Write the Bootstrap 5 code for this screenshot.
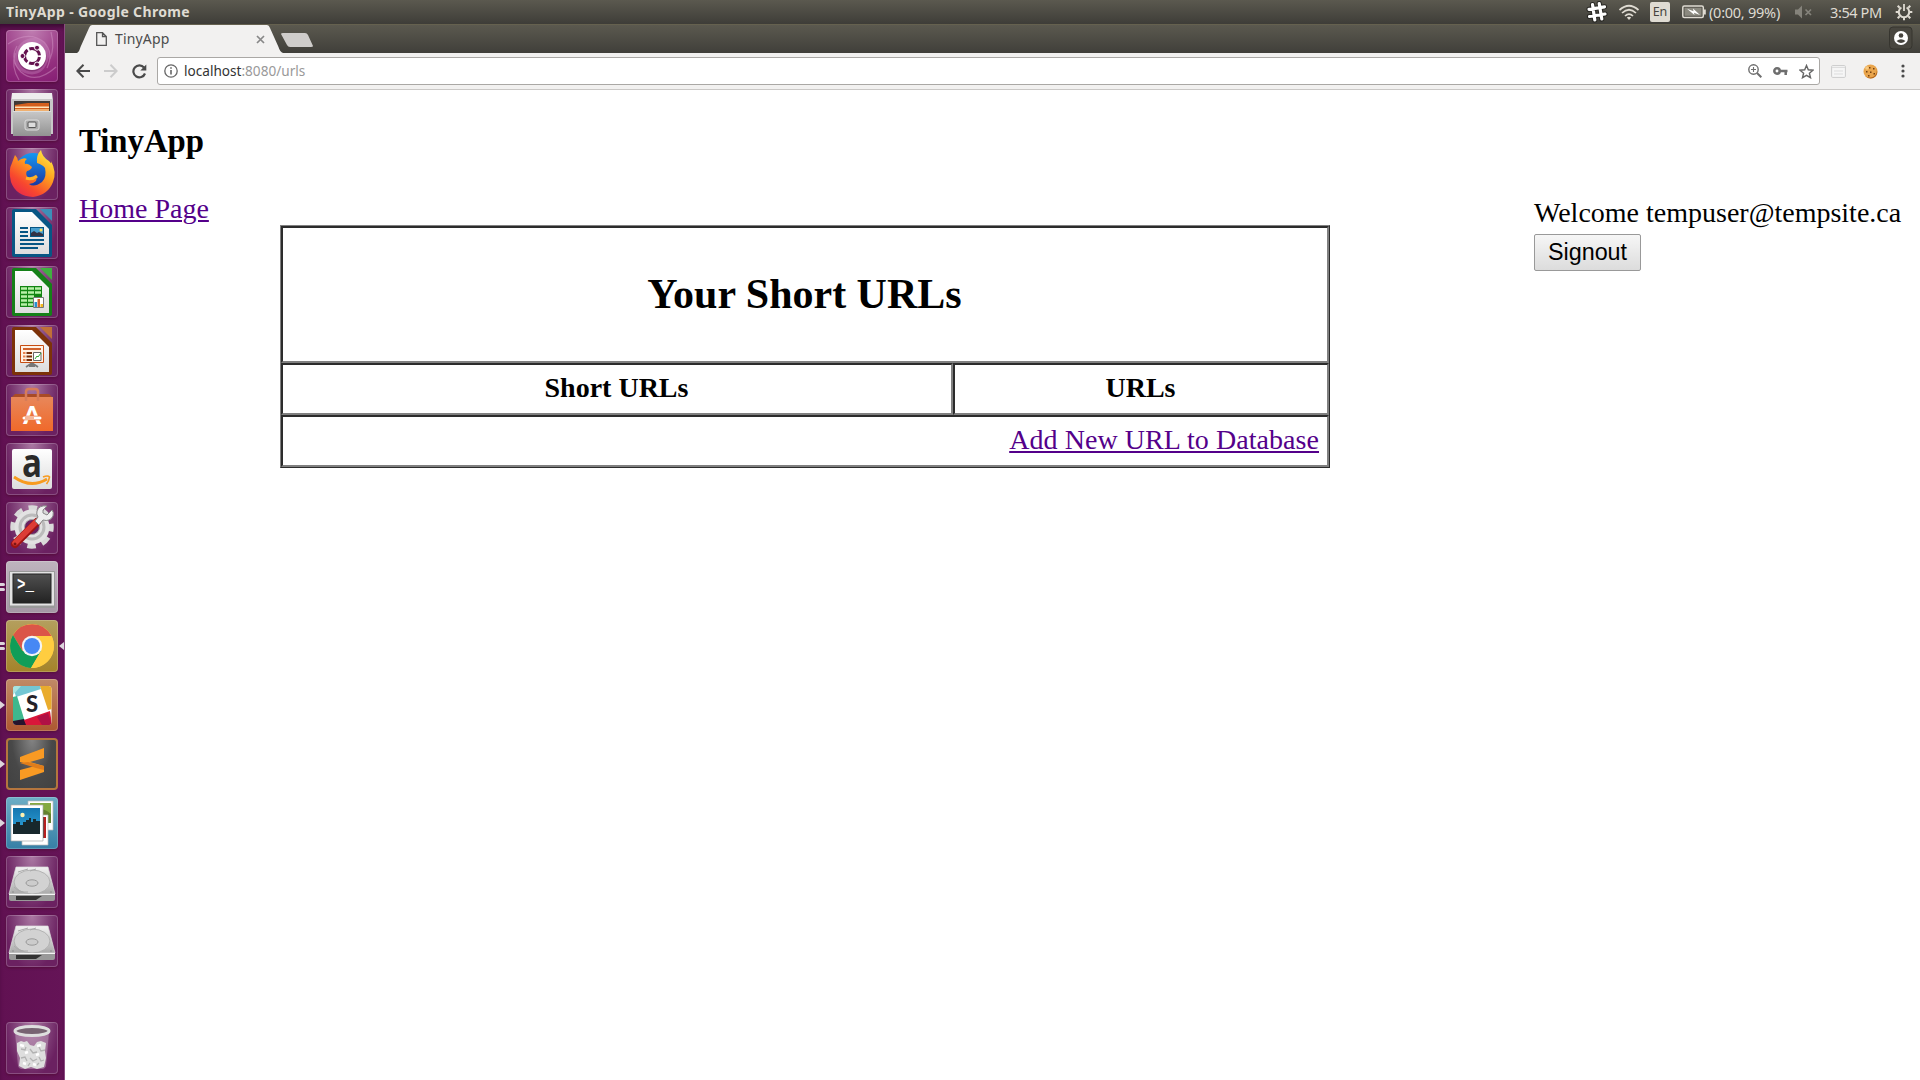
<!DOCTYPE html>
<html lang="en">
<head>
<meta charset="utf-8">
<title>TinyApp</title>
<link href="https://cdn.jsdelivr.net/npm/bootstrap@5.3.0/dist/css/bootstrap.min.css" rel="stylesheet">
<style>
body{width:1920px;height:1080px;overflow:hidden;background:#fff;color:#000;font-family:"Noto Sans",sans-serif}
svg{display:block;flex:none}
.panel-top{height:24px;background:linear-gradient(#5b594f,#3e3d38);color:#dfdbd2;font-size:14.5px;line-height:22px;white-space:nowrap}
.panel-top>div:not(.lang){padding-bottom:1px}
.win-title{font-weight:700;font-size:14px;padding-left:6px;letter-spacing:.35px}
.lang{width:20px;height:20px;margin-left:10px;background:#dfdbd2;color:#46443e;border-radius:2px;line-height:20px;font-size:12.5px;text-align:center}
.slack-ind{margin-right:2px}
.batt-icon{margin-left:12px}
.t-batt{width:74px;margin-left:3px;letter-spacing:-.25px}
.vol-icon{margin-left:11px}
.t-clock{width:54px;margin-left:16px;letter-spacing:-.4px}
.gear-icon{margin:0 7px 0 11px}
.launcher{width:65px;background:linear-gradient(90deg,#611152,#651457);border-right:1px solid #8a4a80;box-shadow:inset 0 5px 5px -2px #3a0a32;padding:6px 0 6px 6px;gap:7px}
.tile{position:relative;width:52px;height:52px;border-radius:4px;background:radial-gradient(ellipse at 50% 0,#ab79a3 0,#82437a 45%,#6b2161 75%);box-shadow:inset 0 0 0 1px #ffffff33,0 1px 3px #3005}
.tile svg{width:52px;height:52px;overflow:visible}
.tile-dash{background:radial-gradient(circle at 50% 0,#c07eb2,#94307f 65%,#851d73)}
.tile-term{background:linear-gradient(#beb4be,#a497a4)}
.tile-chrome{background:linear-gradient(#b49f5e,#a4832a)}
.tile-slack{background:linear-gradient(#c08a67,#ad5830)}
.tile-subl{background:radial-gradient(ellipse at 50% 0,#858585,#484848 55%,#404040);box-shadow:inset 0 0 0 2px #b5763e}
.tile-photo{background:linear-gradient(#6daec6,#367fa6)}
.run1::before{content:"";position:absolute;left:-6px;top:22px;border:4px solid transparent;border-left:5px solid #ddd5dc;border-right:0}
.run2::before,.run2::after{content:"";position:absolute;left:-6px;top:22px;width:5px;height:3px;background:#ddd5dc;border-radius:0 2px 2px 0}
.run2::after{top:27px}
.focusmark{position:absolute;left:53px;top:22px;border:4px solid transparent;border-right:5px solid #ddd5dc;border-left:0}
.tabstrip{height:29px;background:linear-gradient(#5b594f,#403f3a);border-top:1px solid #65614f}
.tab-shape{position:relative;width:206px;height:28px;margin-left:12px;color:#4c4c4c;font-size:14px}
.tab-shape>svg.bgshape{position:absolute;left:0;top:0}
.tab-in{position:relative;height:28px;padding:0 18px 0 19px}
.tab-label{margin-left:8px;padding-bottom:2px;letter-spacing:.15px}
.newtab{margin:7px 0 0 -3px}
.avatar-btn{margin:1px 7px 0 0}
.toolbar-c{height:37px;background:#f2f1f0;border-bottom:1px solid #cac8c6}
.ic-back{margin-left:11px}
.ic-next{margin-left:14px}
.ic-11{margin-left:11px}
.ic-17{margin-left:17px}
.ic-23{margin-left:23px}
.omni{height:28px;width:1663px;margin-left:10px;background:#fff;border:1px solid #aaa8a5;border-radius:3px;font-size:13.6px;color:#333;padding:0 5px 0 6px}
.urltext{margin-left:6px}
.omni .dim{color:#999}
.page{font-family:"Liberation Serif",serif;font-size:28px;line-height:32px;padding:0 14px}
.page a{color:#54008a;text-decoration:underline;text-decoration-thickness:2px;text-underline-offset:2px}
.page h3{font-size:32.76px;line-height:38px;font-weight:700;margin:0;padding-top:32px}
.home{margin-top:33px;width:max-content}
.url-table{width:1050px;border-collapse:separate;border-spacing:0;border:1px solid;border-color:#808080 #2c2c2c #2c2c2c #808080;margin:0 0 0 201px;table-layout:fixed}
.col-short{width:672px}
.col-long{width:376px}
.url-table td,.url-table th{border:2px solid;border-color:#2c2c2c #808080 #808080 #2c2c2c;padding:7px 8px 9px 7px;height:52px;box-sizing:border-box}
.url-table td{letter-spacing:.06px}
.url-table tr:first-child th{height:137px}
.url-table h2{font-size:42px;line-height:48px;font-weight:700;margin:0}
.signed{width:372px;margin-top:37px}
.signout{font:23.33px/27px "Liberation Sans",sans-serif;width:107px;height:37px;padding:4px 0;border:1px solid #999;border-radius:2px;background:linear-gradient(#f6f6f6,#dcdcdc);color:#000;display:block;margin-top:5px}
</style>
<script src="https://cdn.jsdelivr.net/npm/bootstrap@5.3.0/dist/js/bootstrap.bundle.min.js"></script>
</head>
<body class="d-flex flex-column">
<svg width="0" height="0" class="position-absolute">
<defs>
<linearGradient id="silver" x2="0" y2="1"><stop stop-color="#f2f2f2"/><stop offset="1" stop-color="#aaa"/></linearGradient>
<linearGradient id="paper" x2="0" y2="1"><stop stop-color="#fff"/><stop offset="1" stop-color="#ddd"/></linearGradient>
<linearGradient id="cab" x2="0" y2="1"><stop stop-color="#c8c8c8"/><stop offset="1" stop-color="#929292"/></linearGradient>
<linearGradient id="bag" x2="0" y2="1"><stop stop-color="#e8875a"/><stop offset="1" stop-color="#f0692a"/></linearGradient>
<linearGradient id="fox" x1=".9" y1="0" x2=".2" y2="1"><stop stop-color="#fff44a"/><stop offset=".4" stop-color="#ffa11e"/><stop offset=".75" stop-color="#f8482e"/><stop offset="1" stop-color="#e6264e"/></linearGradient>
<linearGradient id="globe" x2="0" y2="1"><stop stop-color="#1498f2"/><stop offset="1" stop-color="#1b2d9a"/></linearGradient>
<linearGradient id="sky" x2="0" y2="1"><stop stop-color="#1576b0"/><stop offset="1" stop-color="#30a5dc"/></linearGradient>
<linearGradient id="scr" x2="0" y2="1"><stop stop-color="#505050"/><stop offset="1" stop-color="#222"/></linearGradient>
<g id="drive"><path d="M10 11H42L49 38H3z" fill="url(#silver)" stroke="#ddd" stroke-width=".7"/><ellipse cx="26" cy="26" rx="18" ry="12" fill="#d2d2d2" stroke="#aaa" stroke-width=".8"/><ellipse cx="26" cy="27" rx="6" ry="3.2" fill="#ccc" stroke="#999"/><path d="M12 16l10-3M24 15l6-2M8 31q6 6 14 5" stroke="#aaa" fill="none"/><path d="M3 38H49V43Q49 45 47 45H5Q3 45 3 43z" fill="#999"/><path d="M10 40H36L30 44H10z" fill="#333"/><path d="M3 38.5H49" stroke="#f5f5f5"/><circle cx="7" cy="36" r=".8" fill="#888"/><circle cx="45" cy="36" r=".8" fill="#888"/></g>
</defs></svg>

<header class="panel-top d-flex align-items-center flex-shrink-0">
<div class="win-title me-auto">TinyApp - Google Chrome</div>
<svg class="slack-ind" width="22" height="22" viewBox="0 0 22 22" fill="none" stroke-linecap="round"><path d="M6.500 3.500L8.800 19M13.200 2.500L15.800 18M3 8.300L18.500 5.800M3.500 15.500L19 13" stroke="#272622" stroke-width="5.200"/><path d="M6.500 3.500L8.800 19M13.200 2.500L15.800 18M3 8.300L18.500 5.800M3.500 15.500L19 13" stroke="#fff" stroke-width="3.200"/></svg>
<svg class="ms-2" width="22" height="20" viewBox="1 0 22 20" fill="none" stroke="#dfdbd2" stroke-width="1.700"><path d="M2.500 8Q12 -.5 21.500 8"/><path d="M5 11Q12 4.500 19 11"/><path d="M8 14Q12 10 16 14"/><path d="M12 18l-2.200-2.500q2.200-1.300 4.400 0z" fill="#dfdbd2" stroke="none"/></svg>
<div class="lang">En</div>
<svg class="batt-icon" width="24" height="16" viewBox="0 0 24 16"><rect x=".8" y="2" width="20.500" height="11.500" rx="1.500" fill="none" stroke="#dfdbd2" stroke-width="1.500"/><rect x="2.500" y="3.700" width="17" height="8.100" fill="#8b897f"/><path d="M22 5.500h1.800v5H22z" fill="#dfdbd2"/><path d="M5 4.800L11.500 7.300L11 4.500L18 11L12 8.700L12.500 11z" fill="#fff"/></svg>
<div class="t-batt">(0:00, 99%)</div>
<svg class="vol-icon" width="20" height="16" viewBox="0 0 20 16"><path d="M1 5.500h3l4-4v13l-4-4H1z" fill="#85837b"/><path d="M11.500 5.500l5.500 5.500M17 5.500l-5.500 5.500" stroke="#85837b" stroke-width="1.700"/></svg>
<div class="t-clock">3:54 PM</div>
<svg class="gear-icon" width="18" height="18" viewBox="0 0 18 18" fill="none" stroke="#dfdbd2"><path d="M6.400 4.500A5.200 5.200 0 1 0 11.600 4.500" stroke-width="2"/><path d="M9 1V8" stroke-width="1.800"/><path d="M2.700 2.700l2 2M15.300 2.700l-2 2M.7 9h2.500M17.300 9h-2.500M2.700 15.300l2-2M15.300 15.300l-2-2M9 17.300v-2.500" stroke-width="2"/></svg>
</header>

<div class="d-flex flex-grow-1">
<nav class="launcher d-flex flex-column flex-shrink-0" aria-label="Launcher">
<div class="tile tile-dash"><svg viewBox="0 0 52 52"><path d="M2 14Q22 0 38 12Q48 23 41 38M50 37Q30 55 15 42Q3 30 11 16M13 50Q5 37 9 23M45 2Q49 18 44 29" fill="none" stroke="#d69bca" stroke-opacity=".45" stroke-width="1.200"/><path d="M8 28Q12 7 30 8Q43 12 43 27Q38 47 22 44Q8 40 8 28" fill="#d59bcd" opacity=".3"/><circle cx="26" cy="27" r="14.500" fill="#5b104c" opacity=".4"/><circle cx="26" cy="26" r="14" fill="#fff"/><circle cx="26" cy="26" r="7.500" fill="none" stroke="#64124f" stroke-width="3" stroke-dasharray="13.700 2" stroke-dashoffset="-1"/><g fill="#64124f" stroke="#fff"><circle cx="16.500" cy="26" r="2.500"/><circle cx="31" cy="17.700" r="2.500"/><circle cx="31" cy="34.500" r="2.500"/></g></svg></div>
<div class="tile"><svg viewBox="0 0 52 52"><path d="M6 4H46L47 12H5z" fill="#eee"/><path d="M5 10H47V45H5z" fill="#c8c8c8"/><path d="M8 12H44V23H8z" fill="#3f3a36"/><path d="M9 16L22 14H43V22H9z" fill="#d35f1d"/><path d="M9 17.500H43V19H9z" fill="#ffe3b8"/><path d="M9 20H43V22H9z" fill="#efb070"/><path d="M7 22H45V47H7z" fill="url(#cab)"/><path d="M7 22.500H45" stroke="#ddd"/><rect x="19" y="31" width="14" height="10" rx="2" fill="#aaa" stroke="#ddd"/><rect x="22" y="33" width="8" height="5.500" rx="1" fill="#ddd" stroke="#555"/></svg></div>
<div class="tile"><svg viewBox="0 0 52 52"><circle cx="27" cy="23" r="18" fill="url(#globe)"/><path d="M9 7Q12 10 12 13Q17 9 21 11Q18 13 19 16Q22 15 26 19Q25 22 21 23Q19 26 22 30Q28 33 31 29L30 33Q27 36 23 36Q28 40 36 34Q41 29 39 20Q37 17 31 15Q30 7 35 2Q36 9 43 13Q46 17 45 13Q51 24 47 34Q42 47 27 49Q10 48 5 34Q2 22 6 15Q7 12 9 7z" fill="url(#fox)"/><path d="M20 30Q26 32 31 28" stroke="#ffb327" stroke-width="3" fill="none"/></svg></div>
<div class="tile"><svg viewBox="0 0 52 52"><path d="M8 2H30L46 18V48Q46 50 44 50H8Q6 50 6 48V4Q6 2 8 2z" fill="#075684"/><path d="M34 2H46V14z" fill="#3d8fb8"/><path d="M9 5H26L43 22V47H9z" fill="url(#paper)"/><path d="M14 21h8M14 25h8M14 29h8M14 33h24M14 37h24M14 41h18" stroke="#075684" stroke-width="2"/><path d="M24 20h14v10H24z" fill="#075684"/><path d="M25 21h12v8H25z" fill="#4aa0cf"/><path d="M25 29v-3l3-2 3 2 2-1 4 2v2z" fill="#334"/><circle cx="35" cy="23" r="1.500" fill="#fd5"/></svg></div>
<div class="tile"><svg viewBox="0 0 52 52"><path d="M8 2H30L46 18V48Q46 50 44 50H8Q6 50 6 48V4Q6 2 8 2z" fill="#158018"/><path d="M34 2H46V14z" fill="#40b040"/><path d="M9 5H26L43 22V47H9z" fill="url(#paper)"/><path d="M14 20h22v21H14z" fill="#128412"/><path d="M15 21.300h6v2.500h-6zM22 21.300h6v2.500h-6zM29 21.300h6v2.500h-6zM15 25.300h6v2.500h-6zM22 25.300h6v2.500h-6zM29 25.300h6v2.500h-6zM15 29.300h6v2.500h-6zM22 29.300h6v2.500h-6zM15 33.300h6v2.500h-6zM22 33.300h6v2.500h-6zM15 37.300h6v2.500h-6zM22 37.300h6v2.500h-6z" fill="#b8f0a8"/><path d="M27.500 31.500h10v10h-10z" fill="#fff" stroke="#777"/><path d="M28.500 36h2.500v5h-2.500z" fill="#278fd0"/><path d="M31.500 33h2.500v8h-2.500z" fill="#d6602a"/><path d="M34.500 38H37v3h-2.500z" fill="#f3b81f"/></svg></div>
<div class="tile"><svg viewBox="0 0 52 52"><path d="M8 2H30L46 18V48Q46 50 44 50H8Q6 50 6 48V4Q6 2 8 2z" fill="#7c3209"/><path d="M34 2H46V14z" fill="#c07038"/><path d="M9 5H26L43 22V47H9z" fill="url(#paper)"/><path d="M14.500 20.500h23v17h-23z" fill="#fff2e5" stroke="#c64d12"/><path d="M17 24h18" stroke="#d0622c" stroke-width="2"/><path d="M17 28h2.500M17 31.500h2.500M17 35h2.500" stroke="#e8834f" stroke-width="2"/><path d="M20.500 28h5.500M20.500 31.500h5.500M20.500 35h5.500" stroke="#792f08" stroke-width="2"/><path d="M27.500 27.500h7.500v8h-7.500z" fill="#fff" stroke="#666"/><path d="M29 34l2-3 1 1 3-4" stroke="#31a831" fill="none"/><path d="M26 38l-6 4M26 38l6 4M23 41h6" stroke="#777" stroke-width="1.800"/></svg></div>
<div class="tile"><svg viewBox="0 0 52 52"><path d="M5 14L9 10H43L47 14z" fill="#a94b26"/><path d="M5 13H47V47H5z" fill="url(#bag)"/><path d="M20 17V8Q20 5 23 5H29Q32 5 32 8V17" fill="none" stroke="#d77c59" stroke-width="2.500"/><text x="26" y="40" text-anchor="middle" font-family="Lato" font-weight="900" font-size="25" fill="#fff">A</text><path d="M17 34H35" stroke="#ed7037" stroke-width="4.500"/><path d="M18 34H34" stroke="#fff" stroke-width="3" stroke-linecap="round"/><path d="M19 34H28" stroke="#ed7037"/></svg></div>
<div class="tile"><svg viewBox="0 0 52 52"><rect x="6" y="6" width="40" height="40" rx="2" fill="url(#paper)"/><text x="16" y="34" textLength="20" lengthAdjust="spacingAndGlyphs" font-family="Open Sans" font-weight="700" font-size="39" fill="#2a2a2a">a</text><path d="M8 34Q25 46 41 36" fill="none" stroke="#f79b20" stroke-width="2.800"/><path d="M37 34Q42 32 43.500 34Q43 38 40.500 41" fill="none" stroke="#f79b20" stroke-width="1.700"/></svg></div>
<div class="tile"><svg viewBox="0 0 52 52"><circle cx="26" cy="25" r="19" fill="none" stroke="#d9d9d9" stroke-width="5.500" stroke-dasharray="8.500 6.420" stroke-dashoffset="4"/><circle cx="26" cy="25" r="12.500" fill="none" stroke="#e2e2e2" stroke-width="10"/><circle cx="26" cy="25" r="12" fill="none" stroke="#bbb" stroke-width="3"/><circle cx="26" cy="25" r="7.500" fill="#6b2161" stroke="#aaa"/><path d="M9 42L31 20" stroke="#9e1212" stroke-width="8" stroke-linecap="round"/><path d="M9 41L30 20" stroke="#dc3c35" stroke-width="5.500" stroke-linecap="round"/><path d="M29 19L33 23L37 18Q44 20 47 14Q48 10 46 8L41 13L37 11L37 8L41 4Q33 3 31 9Q30 12 32 15z" fill="#eee" stroke="#888"/><circle cx="9" cy="42" r="1.500" fill="#7a1515"/></svg></div>
<div class="tile run2 tile-term"><svg viewBox="0 0 52 52"><rect x="3" y="10" width="46" height="37" rx="1" fill="#999"/><rect x="4" y="11" width="44" height="33.500" fill="#e3e3e3"/><rect x="7" y="13" width="38" height="29" fill="url(#scr)" stroke="#222"/><text x="11" y="29" textLength="17" lengthAdjust="spacingAndGlyphs" font-family="Liberation Mono" font-weight="700" font-size="19" fill="#fff">&gt;_</text></svg></div>
<div class="tile run2 tile-chrome"><svg viewBox="0 0 52 52"><circle cx="26" cy="26" r="22" fill="#ffcd40"/><path d="M7 15A22 22 0 0 1 45.500 16H26L16.500 31z" fill="#db5548"/><path d="M7 15A22 22 0 0 0 25 48L35 31L16.500 31z" fill="#109d58"/><path d="M45.500 16H26L35 31L25 48A22 22 0 0 0 45.500 16z" fill="#ffcd40"/><circle cx="26" cy="26" r="10.200" fill="#f4f4f4"/><circle cx="26" cy="26" r="8" fill="#4688f4"/></svg><i class="focusmark"></i></div>
<div class="tile run1 tile-slack"><svg viewBox="0 0 52 52"><clipPath id="sq"><rect x="7" y="7" width="38.500" height="39" rx="3"/></clipPath><g clip-path="url(#sq)"><path d="M0 0H52V52H0z" fill="#fff"/><path d="M7 7H34L35 10L10 18z" fill="#74c6d3"/><path d="M34 7H46V30L42 31z" fill="#e9ac2d"/><path d="M7 18L11 17L19 43L7 43z" fill="#3eb88d"/><path d="M7 42L18 40L21 46H7z" fill="#27142d"/><path d="M18 41L44 32L46 46H20z" fill="#d9163a"/><path d="M31 38L42 34L46 46H36z" fill="#b01045"/><path d="M7 7h8L7 16z" fill="#a8e3e0"/></g><text x="26" y="33" text-anchor="middle" font-family="Lato" font-weight="900" font-size="22" fill="#242229">S</text></svg></div>
<div class="tile run1 tile-subl"><svg viewBox="0 0 52 52"><path d="M14 19L38 10V20L24 24L38 28V34L14 42V32L29 28L14 24z" fill="#f99a23"/><path d="M22 24L38 28V32L30 30L14 25z" fill="#df7d1b"/></svg></div>
<div class="tile run1 tile-photo"><svg viewBox="0 0 52 52"><path d="M22 4H47V33H22z" fill="#fff" stroke="#bbb" stroke-width=".7"/><path d="M24 6H45V26H24z" fill="#84a940"/><path d="M24 15Q35 8 45 17V26H24z" fill="#64812f"/><path d="M16 18H42V48H16z" fill="#fff" stroke="#bbb" stroke-width=".7"/><path d="M18 20H40V41H18z" fill="#b72020"/><path d="M36 20h2v21h-2z" fill="#501c19"/><path d="M5 8H37V44H5z" fill="#fff" stroke="#aaa" stroke-width=".7"/><path d="M7 11H34V37H7z" fill="url(#sky)"/><path d="M7 27h3v-2h4v3h3v-3h3v-2h3v-2h2v4h2v-3h3v2h4V37H7z" fill="#17282d"/><circle cx="16.500" cy="18" r="2.200" fill="#fff1b0"/></svg></div>
<div class="tile"><svg viewBox="0 0 52 52"><use href="#drive"/></svg></div>
<div class="tile"><svg viewBox="0 0 52 52"><use href="#drive"/></svg></div>
<div class="tile mt-auto"><svg viewBox="0 0 52 52"><path d="M9 10H43L40 44Q39 47 36 47H16Q13 47 12 44z" fill="#caaec5" opacity=".45"/><path d="M11 21l4-2 3 1 3-1 3 4 4 1 3-4 4-1 5 2-1 8 1 7-2 9-7 2-6-2-6 2-6-3 1-8-3-7z" fill="#dedede"/><path d="M15 27l4 1 1-3M24 27l3 4 4-1M33 25l2 4 4-1M15 36l4-1 2 4M24 36l3 3 4-2M33 35l2 4 3-1M22 44l2-3M31 43l2-2" fill="none" stroke="#b2b2b2" stroke-width="1.300"/><path d="M14 23l4 1M31 24l4-1M19 31l3-1M30 33l3-1M17 41l3 1M27 42l3 1" stroke="#fff" stroke-width="2.500" fill="none"/><ellipse cx="26" cy="9" rx="17" ry="4.500" fill="#776372" stroke="#dedede" stroke-width="3"/></svg></div>
</nav>

<main class="flex-grow-1">
<div class="tabstrip d-flex">
<div class="tab-shape"><svg class="bgshape" width="206" height="28"><path d="M0 28C2 27 2.500 25 3.500 22L12 3Q13 0 15 0H190Q192 0 193 3L201.500 22Q203 27 206 28z" fill="#f2f1f0"/></svg>
<div class="tab-in d-flex align-items-center"><svg width="11" height="14" viewBox="0 0 11 14" fill="none" stroke="#555" stroke-width="1.300"><path d="M.7.7H6.500L10.300 4.500V13.300H.7zM6.500.7V4.500H10.300"/></svg><span class="tab-label me-auto">TinyApp</span><svg width="9" height="9" viewBox="0 0 9 9" stroke="#888" stroke-width="1.700"><path d="M1 1l7 7M8 1L1 8"/></svg></div></div>
<svg class="newtab me-auto" width="34" height="16"><path d="M3 1H25Q27 1 28 3L33 14Q33 15 31 15H10Q8 15 7 13L1 2Q1 1 3 1z" fill="#cfcdcb"/></svg>
<svg class="avatar-btn" width="24" height="24" viewBox="0 0 24 24"><rect x=".5" y="1" width="22.500" height="22" rx="3.500" fill="#48463f" stroke="#36352f"/><circle cx="12" cy="12" r="7" fill="#fff"/><circle cx="12" cy="9.500" r="2.300" fill="#45433d"/><path d="M7.500 15Q12 11.500 16.500 15Q12 19 7.500 15z" fill="#45433d"/></svg>
</div>
<div class="toolbar-c d-flex align-items-center">
<svg class="ic-back" width="14" height="14" viewBox="0 0 14 14" fill="none" stroke="#4a4a4a" stroke-width="2"><path d="M14 7H1.500M7.500.8L1.400 7l6.100 6.200"/></svg>
<svg class="ic-next" width="14" height="14" viewBox="0 0 14 14" fill="none" stroke="#ccc" stroke-width="2"><path d="M0 7H12.500M6.500.8L12.600 7l-6.100 6.200"/></svg>
<svg class="ic-next" width="15" height="15" viewBox="0 0 15 15"><path d="M13 9.500A6 6 0 1 1 12 3.500" fill="none" stroke="#4a4a4a" stroke-width="2.200"/><path d="M14.300.5V6.500H8.300z" fill="#4a4a4a"/></svg>
<div class="omni d-flex align-items-center"><svg width="14" height="14" viewBox="0 0 14 14"><circle cx="7" cy="7" r="6.200" fill="none" stroke="#666" stroke-width="1.300"/><path d="M7 6v4.500M7 3.300v1.500" stroke="#666" stroke-width="1.600"/></svg><span class="me-auto urltext">localhost<span class="dim">:8080/urls</span></span>
<svg width="14" height="14" viewBox="0 0 14 14" fill="none" stroke="#6e6e6e" stroke-width="1.400"><circle cx="5.500" cy="5.500" r="4.700"/><path d="M9 9l4.300 4.300" stroke-width="2"/><path d="M3 5.500h5M5.500 3v5" stroke-width="1.100"/></svg>
<svg class="ic-11" width="15" height="10" viewBox="0 0 15 10"><circle cx="4" cy="5" r="2.700" fill="none" stroke="#6e6e6e" stroke-width="2.500"/><path d="M7 5h7.500M12.700 5v4" stroke="#6e6e6e" stroke-width="2.500"/></svg>
<svg class="ic-11" width="15" height="15" viewBox="0 0 15 15"><path d="M7.500 1.500l1.800 4.300 4.700.4-3.600 3 1.100 4.500-4-2.400-4 2.400 1.100-4.500-3.600-3 4.700-.4z" fill="none" stroke="#666" stroke-width="1.400"/></svg></div>
<svg class="ic-11" width="15" height="13" viewBox="0 0 15 13"><rect x=".6" y=".6" width="13.800" height="11.800" rx="1" fill="#f6f6f6" stroke="#ccc"/><path d="M1 2.500h13" stroke="#ddd"/><path d="M3 6h9M3 9h9" stroke="#ddd"/></svg>
<svg class="ic-17" width="15" height="15" viewBox="0 0 15 15"><circle cx="7.500" cy="7.500" r="7" fill="#e9a54c"/><path d="M2 12Q9 16 13 10Q15 6 12 2Q16 8 13 12Q8 17 2 12z" fill="#b7691d"/><circle cx="4" cy="4" r="1.800" fill="#f6ca82"/><path d="M6 3h1.500v1.500H6zM10 4h1.500v1.500H10zM3 7h1.500v1.500H3zM7 7.500h1.500V9H7zM5 11h1.500v1.500H5zM10.500 9H12v1.500h-1.500z" fill="#744010"/></svg>
<svg class="ic-23" width="4" height="14" viewBox="0 0 4 14" fill="#4a4a4a"><circle cx="2" cy="2" r="1.600"/><circle cx="2" cy="7" r="1.600"/><circle cx="2" cy="12" r="1.600"/></svg>
</div>
<div class="page">
<h3>TinyApp</h3>
<div class="d-flex justify-content-between">
<div>
<a href="#" class="home d-block">Home Page</a>
<table class="url-table">
<colgroup><col class="col-short"><col class="col-long"></colgroup>
<tr><th colspan="2" class="text-center align-middle"><h2>Your Short URLs</h2></th></tr>
<tr><th class="text-center">Short URLs</th><th class="text-center">URLs</th></tr>
<tr><td colspan="2" class="text-end"><a href="#">Add New URL to Database</a></td></tr>
</table>
</div>
<div class="signed">Welcome tempuser@tempsite.ca<button class="signout" type="button">Signout</button></div>
</div>
</div>
</main>
</div>
</body>
</html>
